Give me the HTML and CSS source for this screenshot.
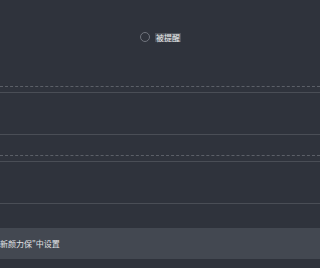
FILE: index.html
```html
<!DOCTYPE html>
<html lang="zh">
<head>
<meta charset="utf-8">
<link rel="stylesheet" href="styles.css">
</head>
<body>
<div class="page">
  <div class="top">
    <div class="radio-row">
      <span class="radio"></span>
      <span class="label">被提醒</span>
    </div>
  </div>
  <div class="dash d1"></div>
  <div class="line l1"></div>
  <div class="line l2"></div>
  <div class="dash d2"></div>
  <div class="line l3"></div>
  <div class="line l4"></div>
  <div class="bar"><span class="bar-text">新颜力保"中设置</span></div>
</div>
</body>
</html>
```

FILE: styles.css
```css
html, body {
  margin: 0;
  padding: 0;
  background: #2f333c;
}
.page {
  width: 100%;
  height: 268px;
  background: #2f333c;
  font-family: "Noto Sans CJK SC", "Noto Sans", sans-serif;
  overflow: hidden;
}
.top {
  height: 86px;
  display: flex;
}
.radio-row {
  margin-top: 32px;
  margin-left: 140px;
  height: 10px;
  display: flex;
  align-items: center;
  gap: 5px;
}
.radio {
  width: 8px;
  height: 8px;
  border: 1px solid #70747d;
  border-radius: 50%;
}
.label {
  font-size: 8px;
  line-height: 9px;
  color: #eceded;
  background: #4f535b;
  padding: 0 1px;
}
.dash {
  height: 0;
  border-top: 1px dashed #5c6068;
}
.line {
  height: 1px;
  background: #4a4e56;
}
.l1 { margin-top: 5px; }
.l2 { margin-top: 41px; }
.d2 { margin-top: 20px; }
.l3 { margin-top: 5px; }
.l4 { margin-top: 41px; }
.bar {
  margin-top: 24px;
  height: 31px;
  background: #434851;
  display: flex;
  align-items: center;
}
.bar-text {
  font-size: 8px;
  color: #e1e3e6;
  white-space: nowrap;
}
```
